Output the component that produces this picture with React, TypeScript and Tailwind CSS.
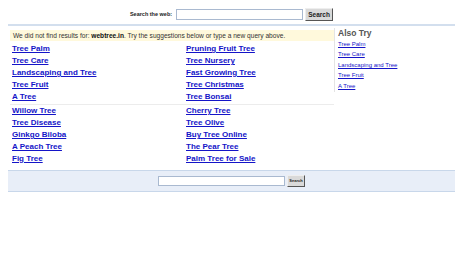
const groupA = [
  ['Tree Palm', 'Pruning Fruit Tree'],
  ['Tree Care', 'Tree Nursery'],
  ['Landscaping and Tree', 'Fast Growing Tree'],
  ['Tree Fruit', 'Tree Christmas'],
  ['A Tree', 'Tree Bonsai'],
];

const groupB = [
  ['Willow Tree', 'Cherry Tree'],
  ['Tree Disease', 'Tree Olive'],
  ['Ginkgo Biloba', 'Buy Tree Online'],
  ['A Peach Tree', 'The Pear Tree'],
  ['Fig Tree', 'Palm Tree for Sale'],
];

const alsoTry = ['Tree Palm', 'Tree Care', 'Landscaping and Tree', 'Tree Fruit', 'A Tree'];

function LinkGroup({ rows }: { rows: string[][] }) {
  return (
    <div className="grid grid-cols-[174px_1fr] pl-[2px]">
      {rows.map(([a, b]) => (
        <div key={a} className="contents">
          <a href="#" className="h-[12px] text-[8px] font-bold leading-[12px] text-[#1414c8] underline">
            {a}
          </a>
          <a href="#" className="h-[12px] text-[8px] font-bold leading-[12px] text-[#1414c8] underline">
            {b}
          </a>
        </div>
      ))}
    </div>
  );
}

export default function App() {
  return (
    <div className="h-[256px] w-[463px] bg-white font-['Liberation_Sans',Arial,sans-serif]">
      <div className="mx-[8px]">
        {/* top search */}
        <div className="flex h-[26px] items-start justify-center border-b-2 border-[#d3dfee] pt-[8px]">
          <span className="mr-[4px] mt-[3px] text-[5.5px] font-bold leading-[7px] text-[#222]">Search the web:</span>
          <div className="mt-[1px] h-[11px] w-[127px] border border-[#a9b9d0] bg-white" />
          <button className="ml-[2px] h-[13px] w-[28px] border border-t-[#eee] border-l-[#eee] border-r-[#555] border-b-[#555] bg-[#d9d9d9] text-[6.5px] font-bold leading-[11px] text-[#222]">
            Search
          </button>
        </div>

        {/* results */}
        <div className="flex">
          <div className="ml-[2px] w-[324px]">
            <div className="mt-[4px] h-[11px] whitespace-nowrap bg-[#fff9dc] pl-[3px] text-[6.6px] leading-[11px] text-[#333]">
              We did not find results for: <b className="text-[#111]">webtree.in</b>. Try the suggestions below or type a new query above.
            </div>
            <div className="mt-[2px]">
              <LinkGroup rows={groupA} />
            </div>
            <div className="h-[2px] border-b border-[#ececec]" />
            <LinkGroup rows={groupB} />
          </div>
          <div className="mt-[2px] h-[64px] border-l border-[#e4e4e4] pl-[3px]">
            <div className="h-[11px] text-[8.5px] font-bold leading-[11px] text-[#555]">Also Try</div>
            {alsoTry.map((t) => (
              <div key={t} className="h-[10.4px] text-[6px] leading-[10.4px]">
                <a href="#" className="text-[#1414c8] underline">
                  {t}
                </a>
              </div>
            ))}
          </div>
        </div>

        {/* bottom search */}
        <div className="mt-[5px] flex h-[22px] items-center justify-center border-y border-[#c8d7ea] bg-[#e8eef8]">
          <div className="h-[10px] w-[127px] border border-[#a9b9d0] bg-white" />
          <button className="ml-[2px] h-[12px] w-[18px] border border-t-[#eee] border-l-[#eee] border-r-[#555] border-b-[#555] bg-[#d9d9d9] text-[4px] font-bold leading-[10px] text-[#222]">
            Search
          </button>
        </div>
      </div>
    </div>
  );
}
